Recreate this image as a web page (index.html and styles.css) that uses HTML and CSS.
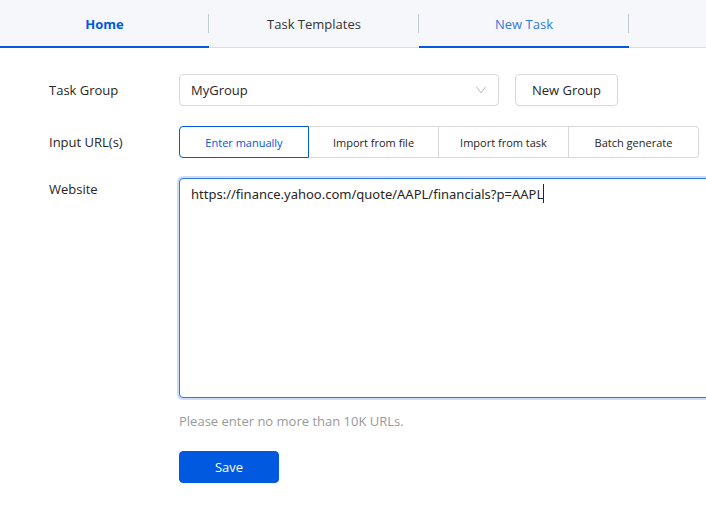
FILE: index.html
```html
<!DOCTYPE html>
<html lang="en">
<head>
    <meta charset="UTF-8">
    <meta name="viewport" content="width=device-width, initial-scale=1.0">
    <title>New Task</title>
    <link rel="stylesheet" href="styles.css">
</head>
<body>
    <nav class="tabs">
        <a class="tab home" href="#">Home</a>
        <a class="tab" href="#">Task Templates</a>
        <a class="tab active" href="#">New Task</a>
    </nav>

    <form class="task-form">
        <div class="row">
            <label class="row-label" for="group">Task Group</label>
            <div class="row-content group-line">
                <div class="select-box">
                    <select id="group">
                        <option>MyGroup</option>
                    </select>
                    <svg class="arrow" width="12" height="12" viewBox="0 0 12 12" fill="none" stroke="#bfbfbf">
                        <path d="M1.3 2.5 L6 9 L10.7 2.5"/>
                    </svg>
                </div>
                <button type="button" class="btn">New Group</button>
            </div>
        </div>

        <div class="row">
            <span class="row-label" id="input-label">Input URL(s)</span>
            <div class="row-content radio-group" role="radiogroup" aria-labelledby="input-label">
                <label class="radio-button"><input type="radio" name="source" checked><span>Enter manually</span></label>
                <label class="radio-button"><input type="radio" name="source"><span>Import from file</span></label>
                <label class="radio-button"><input type="radio" name="source"><span>Import from task</span></label>
                <label class="radio-button"><input type="radio" name="source"><span>Batch generate</span></label>
            </div>
        </div>

        <div class="row">
            <label class="row-label website-label" for="website">Website</label>
            <div class="row-content">
                <div class="editor">
                    <textarea id="website" spellcheck="false" autofocus>https://finance.yahoo.com/quote/AAPL/financials?p=AAPL</textarea>
                    <span class="caret" id="caret"></span>
                </div>
                <p class="hint">Please enter no more than 10K URLs.</p>
                <button type="button" class="btn primary">Save</button>
            </div>
        </div>
    </form>

    <script>
        const website = document.getElementById('website');
        const caret = document.getElementById('caret');

        // put the caret after the last character of the URL
        const style = getComputedStyle(website);
        const ctx = document.createElement('canvas').getContext('2d');
        ctx.font = style.fontSize + ' ' + style.fontFamily;
        const textWidth = ctx.measureText(website.value).width;
        caret.style.left = Math.round(parseFloat(style.paddingLeft) + 1 + textWidth) + 'px';

        // the native caret takes over once the user edits the text
        website.addEventListener('input', function () {
            caret.style.display = 'none';
            website.style.caretColor = 'auto';
        });

        website.focus();
        website.setSelectionRange(website.value.length, website.value.length);
    </script>
</body>
</html>
```
FILE: styles.css
```css
* {
    box-sizing: border-box;
}

body {
    margin: 0;
    background: #fff;
    color: #262626;
    font-family: "Segoe UI", "Open Sans", "Noto Sans", sans-serif;
    font-size: 13px;
    overflow-x: hidden;
}

button, select, textarea {
    font-family: inherit;
    font-size: inherit;
    color: inherit;
}

/* top tabs */
.tabs {
    display: flex;
    height: 48px;
    background: #f5f7fb;
    box-shadow: inset 0 -1px #d9dce2;
}

.tab {
    display: flex;
    flex: 0 0 210px;
    align-items: center;
    justify-content: center;
    position: relative;
    color: #333;
    text-decoration: none;
}

.tab::after {
    content: "";
    position: absolute;
    top: 14px;
    right: 0;
    width: 1px;
    height: 19px;
    background: #c3cdd2;
}

.tab.home {
    flex-basis: 209px;
    font-weight: 700;
}

.tab.home, .tab.active {
    color: #0059de;
    box-shadow: inset 0 -2px #0059de;
}

.tab.active {
    color: #3378e0;
}

/* form */
.task-form {
    display: flex;
    flex-direction: column;
    gap: 20px;
    padding: 26px 0 22px 49px;
}

.row {
    display: flex;
}

.row-label {
    flex: 0 0 130px;
    line-height: 32px;
}

.website-label {
    line-height: 22px;
}

.row-content {
    flex: 1;
    min-width: 0;
}

.group-line {
    display: flex;
    gap: 16px;
}

.select-box {
    position: relative;
    width: 320px;
}

.select-box select {
    width: 100%;
    height: 32px;
    padding: 0 30px 0 11px;
    border: 1px solid #d9d9d9;
    border-radius: 4px;
    background: #fff;
    appearance: none;
}

.arrow {
    position: absolute;
    top: 10px;
    right: 12px;
    pointer-events: none;
}

.btn {
    height: 32px;
    padding: 0 16px;
    border: 1px solid #d9d9d9;
    border-radius: 4px;
    background: #fff;
    box-shadow: 0 2px 0 rgba(0, 0, 0, 0.016);
    cursor: pointer;
}

.btn.primary {
    width: 100px;
    border-color: #0059de;
    background: #0059de;
    color: #fff;
}

.radio-group {
    display: flex;
}

.radio-button {
    flex: 0 0 130px;
    position: relative;
    height: 32px;
    border: 1px solid #d9d9d9;
    border-left: none;
    font-size: 11px;
    line-height: 32px;
    text-align: center;
    cursor: pointer;
}

.radio-button:first-child {
    border-left: 1px solid #d9d9d9;
    border-radius: 4px 0 0 4px;
}

.radio-button:last-child {
    border-radius: 0 4px 4px 0;
}

.radio-button input {
    position: absolute;
    opacity: 0;
    margin: 0;
}

.radio-button:has(input:checked) {
    border-color: #0059de;
    color: #0059de;
}

.editor {
    position: relative;
}

textarea {
    display: block;
    width: calc(100% + 20px);
    height: 220px;
    padding: 4px 11px;
    border: 1px solid #2f78e4;
    border-radius: 4px;
    outline: none;
    box-shadow: 0 0 0 2px #ccdef8;
    font-family: "Segoe UI", "Noto Sans", sans-serif;
    line-height: 22px;
    caret-color: transparent;
    resize: none;
}

.caret {
    position: absolute;
    top: 6px;
    width: 1px;
    height: 19px;
    background: #262626;
}

.hint {
    margin: 12px 0 19px;
    color: #999;
    line-height: 22px;
}
```
